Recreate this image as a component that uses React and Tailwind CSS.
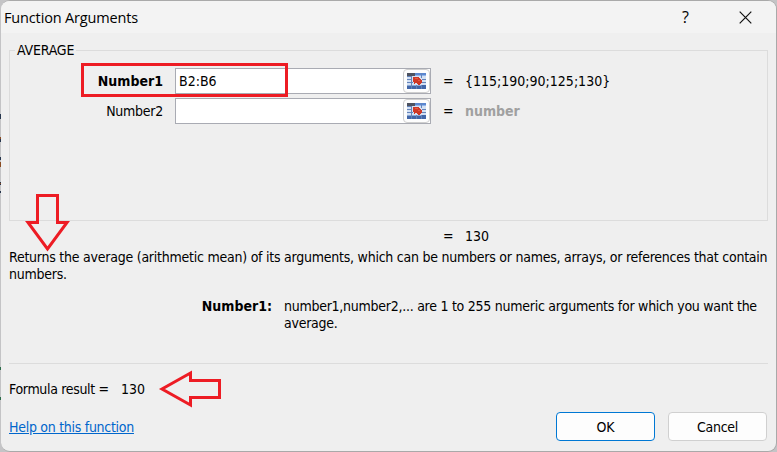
import React from "react";

function RangeIcon() {
  return (
    <svg width="19" height="16" viewBox="0 0 19 16" shapeRendering="crispEdges">
      <rect width="19" height="16" fill="#d3e0f3" />
      <path d="M0 0H8V3H0Z" fill="#4c5260" />
      <path d="M8 0H19V2H8Z" fill="#5b87d0" />
      <path d="M8 2H19V3H8Z" fill="#8fb4ea" />
      <path d="M0 3h5v1H0zM0 6h5v1H0zM0 9h6v1H0zM4 3h1v13H4zM9 12h1v4H9zM14 0h1v5h-1zM14 12h1v4h-1zM15 6h4v1h-4zM15 9h4v1h-4z" fill="#6484ba" />
      <path d="M0 13h4v3H0zM5 13h4v3H5zM10 13h4v3h-4zM15 12h4v4h-4z" fill="#4266a8" />
      <path d="M0 12h4v1H0zM5 12h4v1H5zM10 12h4v1h-4z" fill="#8aa8d6" />
      <path d="M6 4h6v1h1v1h1v1h1v3h-1v1h-1v1h-2v-1h-1v-1H8v1H7V9H6z" fill="#cf3826" />
      <path d="M8 5h3v1H8zM11 7h2v1h-2z" fill="#e55a42" />
    </svg>
  );
}

function Field({ label, bold, value, children }) {
  return (
    <div className="flex h-[26px] items-center">
      <div className={"w-[153px] text-right " + (bold ? "font-bold" : "tracking-[-0.25px]")}>{label}</div>
      <div className="ml-3 flex h-[26px] w-[256px] items-center justify-between border border-[#a9abb3] bg-white pl-[3px]">
        <span>{value}</span>
        <span className="flex h-6 w-[27px] items-center justify-center rounded-[4px] border border-[#cfcfcf] bg-[#fdfdfd]">
          <RangeIcon />
        </span>
      </div>
      <span className="ml-[12px] w-[22px]">=</span>
      {children}
    </div>
  );
}

export default function App() {
  return (
    <div className="relative h-[452px] w-[777px] overflow-hidden bg-[#c4c4c6] pl-px font-['DejaVu_Sans_Condensed','DejaVu_Sans',sans-serif] text-[14px] leading-[17px] text-black [font-stretch:condensed]">
      <div className="flex h-[452px] w-[776px] flex-col overflow-hidden rounded-[9px] border-y border-r border-[#a9a9a9] bg-[#efefef]">
        <header className="flex h-8 shrink-0 items-center bg-[#f3f3f3] pl-[3px] font-['Open_Sans',sans-serif] [font-stretch:normal]">
          <span className="flex-1 text-[14.5px] tracking-[-0.15px]">Function Arguments</span>
          <span className="w-[57px] text-[16px]">?</span>
          <svg className="mr-[24px]" width="13" height="13" viewBox="0 0 13 13" stroke="#111" strokeWidth="1.2">
            <path d="M.7.7l11.6 11.6M12.3.7L.7 12.3" />
          </svg>
        </header>
        <main className="flex flex-1 flex-col pl-2">
          <fieldset className="mt-[9px] h-[179px] w-[759px] border border-[#dcdcdc]">
            <legend className="ml-[5px] h-[17px] px-[2px] tracking-[-0.2px]">AVERAGE</legend>
            <div className="flex flex-col gap-1 pt-[9px]">
              <Field label="Number1" bold value="B2:B6">
                <span>{"{115;190;90;125;130}"}</span>
              </Field>
              <Field label="Number2">
                <span className="font-bold text-[#a0a0a0]">number</span>
              </Field>
            </div>
          </fieldset>
          <div className="flex pl-[434px] pt-[7px]">
            <span className="w-[22px]">=</span>
            <span>130</span>
          </div>
          <p className="mt-1 w-[766px] whitespace-nowrap tracking-[-0.24px]">
            Returns the average (arithmetic mean) of its arguments, which can be numbers or names, arrays, or references that contain
            <br />
            numbers.
          </p>
          <div className="mt-[15px] flex">
            <span className="w-[263px] text-right font-bold">Number1:</span>
            <p className="ml-3 whitespace-nowrap tracking-[-0.26px]">
              number1,number2,... are 1 to 255 numeric arguments for which you want the
              <br />
              average.
            </p>
          </div>
          <hr className="mt-[31px] w-[759px] border-[#dcdcdc]" />
          <div className="mt-[17px] flex h-[17px]">
            <span className="w-[112px] tracking-[-0.33px]">Formula result =</span>
            <span>130</span>
          </div>
          <footer className="mt-[13px] flex h-[30px] items-center">
            <a className="flex-1 pt-[2px] text-[#0066cc] tracking-[-0.28px] underline">Help on this function</a>
            <button className="h-[29px] w-[99px] rounded-[4px] border border-[#0078d4] bg-[#fdfdfd] pt-[2px]">OK</button>
            <button className="ml-[13px] mr-[9px] h-[29px] w-[99px] rounded-[4px] border border-[#d0d0d0] bg-[#fdfdfd] pt-[2px] tracking-[-0.3px]">Cancel</button>
          </footer>
        </main>
      </div>
      <svg className="pointer-events-none absolute left-0 top-0" width="777" height="452" fill="none" stroke="#ed1c24" strokeWidth="3">
        <path d="M.5 114v5M.5 139v3M.5 157v3M.5 182v3M.5 191v2" stroke="#27364d" strokeWidth="1" />
        <path d="M.5 137v2M.5 162v5M.5 183v1" stroke="#8a4b22" strokeWidth="1" />
        <path d="M.5 367v3M.5 397v3" stroke="#2a6b48" strokeWidth="1" />
        <path d="M82.5 64.5H286.5V95.5H82.5Z" />
        <path d="M37.5 195.5H57.5V222.5H67L47.5 249L28 222.5H37.5Z" />
        <path d="M219.5 380.5V397.5H190.5V405L162 389L190.5 373V380.5Z" />
      </svg>
    </div>
  );
}
